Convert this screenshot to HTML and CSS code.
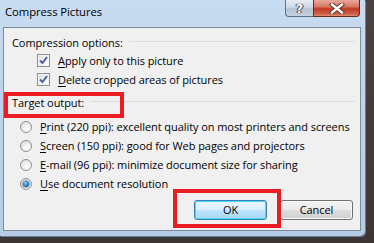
FILE: index.html
```html
<!DOCTYPE html>
<html>
<head>
<meta charset="utf-8">
<link rel="stylesheet" href="styles.css">
</head>
<body>
<div class="screen">
  <div class="window">
    <div class="titlebar">
      <span class="title">Compress Pictures</span>
      <div class="caption-btns">
        <span class="cap help">?</span>
        <span class="cap close">
          <svg width="16" height="11" viewBox="0 0 16 11">
            <path d="M3 1.5 L13 9.5 M13 1.5 L3 9.5" stroke="#5a2a22" stroke-width="4.2" stroke-linecap="square"/>
            <path d="M3 1.5 L13 9.5 M13 1.5 L3 9.5" stroke="#ffffff" stroke-width="2.4" stroke-linecap="square"/>
          </svg>
        </span>
      </div>
    </div>
    <div class="client">
      <div class="group-head"><span>Compression options:</span><span class="rule"></span></div>
      <div class="opt check-row"><span class="box"><svg width="11" height="11" viewBox="0 0 11 11"><path d="M2 5.5 L4.5 8 L9 2" fill="none" stroke="#4b63a0" stroke-width="2"/></svg></span><span><u>A</u>pply only to this picture</span></div>
      <div class="opt check-row"><span class="box"><svg width="11" height="11" viewBox="0 0 11 11"><path d="M2 5.5 L4.5 8 L9 2" fill="none" stroke="#4b63a0" stroke-width="2"/></svg></span><span><u>D</u>elete cropped areas of pictures</span></div>
      <div class="group-head second"><span>Target output:</span><span class="rule"></span></div>
      <div class="opt radio-row"><span class="radio"></span><span><u>P</u>rint (220 ppi): excellent quality on most printers and screens</span></div>
      <div class="opt radio-row"><span class="radio"></span><span><u>S</u>creen (150 ppi): good for Web pages and projectors</span></div>
      <div class="opt radio-row"><span class="radio"></span><span><u>E</u>-mail (96 ppi): minimize document size for sharing</span></div>
      <div class="opt radio-row"><span class="radio on"></span><span><u>U</u>se document resolution</span></div>
      <div class="buttons">
        <span class="btn default">OK</span>
        <span class="btn">Cancel</span>
      </div>
    </div>
  </div>
  <div class="mark mark-target"></div>
  <div class="mark mark-ok"></div>
</div>
</body>
</html>
```

FILE: styles.css
```css
html, body {
  margin: 0;
  padding: 0;
}
body {
  width: 374px;
  height: 243px;
  overflow: hidden;
  background: #403939;
  font-family: "Open Sans", "Noto Sans", sans-serif;
  font-size: 11px;
  letter-spacing: -0.07px;
  color: #000;
}
.screen {
  position: relative;
  width: 374px;
  height: 243px;
  background: linear-gradient(180deg, #4a4343 0%, #3b3535 100%);
}
.window {
  width: 365px;
  height: 236px;
  background: linear-gradient(180deg, #c8dcf1 0%, #bcd3eb 40%, #b4cce6 100%);
  display: flex;
  flex-direction: column;
  border-bottom-right-radius: 5px;
  box-shadow: 1px 1px 0 #6f7f90;
}
.titlebar {
  height: 27px;
  display: flex;
  align-items: flex-start;
  justify-content: space-between;
}
.title {
  padding-left: 5px;
  padding-top: 4px;
  font-size: 11.3px;
  line-height: 16px;
  color: #000;
}
.caption-btns {
  display: flex;
  margin-right: 5px;
}
.cap {
  height: 17px;
  display: flex;
  align-items: center;
  justify-content: center;
  border: 1px solid #5f6f84;
  border-top: none;
  box-sizing: border-box;
}
.help {
  width: 28px;
  border-bottom-left-radius: 4px;
  border-right: none;
  background: linear-gradient(180deg, #e4ebf3 0%, #cfd9e5 45%, #b3c2d3 55%, #c4d1df 100%);
  color: #fff;
  font-family: "DejaVu Sans", sans-serif;
  font-weight: bold;
  font-size: 13px;
  line-height: 17px;
  text-shadow: 0 0 1px #2a3a4c, 0 0 1px #2a3a4c, 1px 0 0 #2a3a4c, -1px 0 0 #2a3a4c;
}
.close {
  width: 47px;
  border-bottom-right-radius: 4px;
  border-color: #6a2a20;
  background: linear-gradient(180deg, #e9a99c 0%, #d77a66 40%, #c23a22 55%, #cf5e45 85%, #de8b76 100%);
}
.client {
  margin-left: 3px;
  width: 358px;
  height: 204px;
  box-sizing: border-box;
  border: 1px solid #7f8a97;
  background: #f0f0f0;
  display: flex;
  flex-direction: column;
  padding: 7px 6px 0 8px;
}
.group-head {
  height: 16px;
  display: flex;
  align-items: center;
  line-height: 16px;
}
.group-head .rule {
  flex: 1;
  height: 1px;
  background: #d5dfe5;
  margin-left: 6px;
  margin-top: -3px;
}
.group-head.second {
  margin-top: 6px;
}
.group-head.second + .opt {
  margin-top: 6px;
}
.opt {
  height: 19px;
  display: flex;
  align-items: center;
  line-height: 19px;
  white-space: nowrap;
}
.check-row {
  padding-left: 25px;
}
.radio-row {
  padding-left: 8px;
}
.opt u {
  text-decoration-thickness: 1px;
  text-underline-offset: 2px;
}
.box {
  width: 13px;
  height: 13px;
  box-sizing: border-box;
  border: 1px solid #8e8f8f;
  background: linear-gradient(135deg, #dcdcdc 0%, #f4f4f4 60%, #ffffff 100%);
  box-shadow: inset 0 0 0 1px #f4f4f4;
  display: flex;
  align-items: center;
  justify-content: center;
  margin-right: 8px;
}
.radio {
  width: 12px;
  height: 12px;
  box-sizing: border-box;
  border-radius: 50%;
  border: 1px solid #8e8f8f;
  background: radial-gradient(circle at 65% 70%, #ffffff 0%, #f0f0f0 40%, #d6d6d6 100%);
  margin-right: 8px;
  position: relative;
  flex: none;
}
.radio.on::after {
  content: "";
  position: absolute;
  left: 2px;
  top: 2px;
  width: 6px;
  height: 6px;
  border-radius: 50%;
  background: radial-gradient(circle at 40% 35%, #8fd0f7 0%, #2b84c8 50%, #0b4a82 100%);
  box-shadow: 0 0 0 0.5px #1d3f66;
}
.buttons {
  margin-top: 7px;
  display: flex;
  justify-content: flex-end;
  gap: 13px;
  padding-right: 1px;
}
.btn {
  width: 73px;
  height: 20px;
  box-sizing: border-box;
  border: 1px solid #707070;
  border-radius: 3px;
  background: linear-gradient(180deg, #f2f2f2 0%, #ebebeb 48%, #dddddd 52%, #cfcfcf 100%);
  display: flex;
  align-items: center;
  justify-content: center;
  line-height: 18px;
  box-shadow: inset 0 0 0 1px #fbfbfb;
}
.btn.default {
  border-color: #3c7fb1;
  background: linear-gradient(180deg, #eaf6fd 0%, #d9f0fc 48%, #bee6fd 52%, #a7d9f5 100%);
  box-shadow: inset 0 0 0 1px #48d8fb;
}
.mark {
  position: absolute;
  border: 4px solid #ec1c24;
  box-sizing: border-box;
}
.mark-target {
  left: 4px;
  top: 92px;
  width: 120px;
  height: 26px;
}
.mark-ok {
  left: 173px;
  top: 189px;
  width: 108px;
  height: 39px;
}
```
